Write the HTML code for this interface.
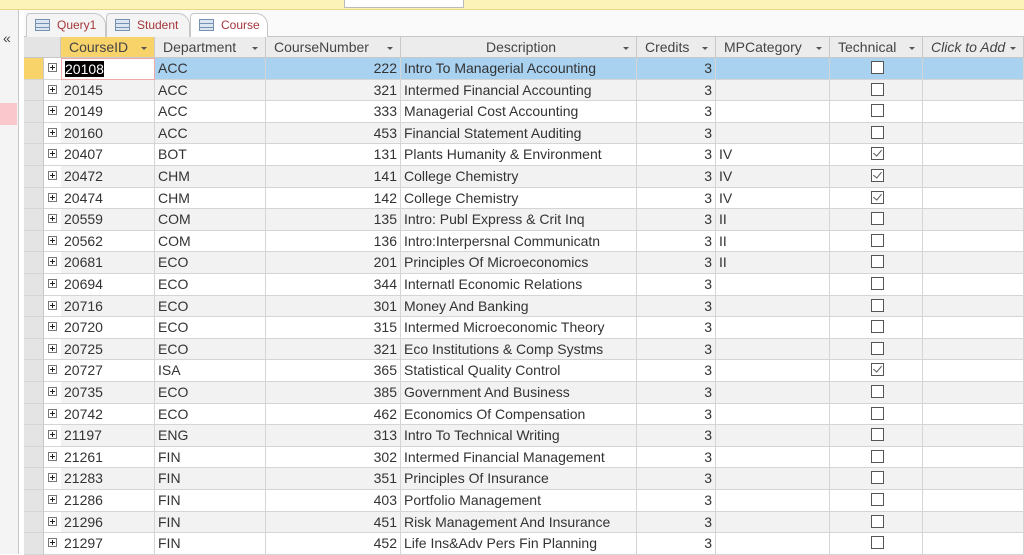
<!DOCTYPE html>
<html><head><meta charset="utf-8"><style>
*{margin:0;padding:0;box-sizing:border-box}
body{width:1024px;height:554px;overflow:hidden;background:#fff;font-family:"Liberation Sans",sans-serif;font-size:14px;color:#333;position:relative}
.top{position:absolute;left:0;top:0;width:1024px;height:10px;background:#fcf3b8;border-bottom:1px solid #e8d98a}
.topbtn{position:absolute;left:344px;top:-2px;width:120px;height:10px;background:#fff;border:1px solid #bbb}
.left{position:absolute;left:0;top:10px;width:19px;height:544px;background:#f4f4f4;border-right:1px solid #c8c8c8}
.pink{position:absolute;left:0;top:93px;width:17px;height:22px;background:#f9c7cc}
.chev{position:absolute;left:3px;top:20px;font-size:14px;color:#444}
.tabbar{position:absolute;left:24px;top:10px;width:1000px;height:27px;background:#fafafa;border-bottom:1px solid #c6c6c6}
.tab{position:absolute;top:3px;height:24px;background:#f4f4f4;border:1px solid #c6c6c6;border-bottom:none;border-radius:4px 12px 0 0;color:#a4373a;font-size:12px;padding:4px 0 0 30px}
.tab.act{background:#fff;height:25px}
.ti{position:absolute;left:8px;top:5px;width:15px;height:12px;border:1px solid #7891b0;background:repeating-linear-gradient(#dbe6f3 0 3px,#7891b0 3px 4px)}
.grid{position:absolute;left:24px;top:37px}
.row{position:absolute;left:0;height:21.6px;width:1000px;display:flex}
.c{height:100%;border-right:1px solid #d5d5d5;border-bottom:1px solid #d5d5d5;padding:0 3px;line-height:21px;white-space:nowrap;overflow:hidden;flex:none}
.hd .c{background:#ececec;border-color:#c8c8c8;color:#444;position:relative;padding-left:8px}
.hd .c.dd::after{content:"";position:absolute;right:7px;top:10px;border:3px solid transparent;border-top:3px solid #555}
.r{text-align:right}
.sel{background:#e4e4e4;border-right:1px solid #c8c8c8}
.ex{background:#fff;position:relative}
.ex i{position:absolute;left:4px;top:5px;width:9px;height:9px;border:1px solid #777;background:#fff}
.ex i::before{content:"";position:absolute;left:1px;top:3px;width:5px;height:1px;background:#222}
.ex i::after{content:"";position:absolute;left:3px;top:1px;width:1px;height:5px;background:#222}
.cb{position:relative}
.cb b{position:absolute;left:41px;top:3px;width:13px;height:13px;border:1px solid #555;background:#fff}
.cb b.k::after{content:"";position:absolute;left:3px;top:0px;width:4px;height:7px;border:solid #555;border-width:0 1.5px 1.5px 0;transform:rotate(40deg)}
.g{background:#f2f2f2}
.w{background:#fff}
.s{background:#a9d1f0}
</style></head><body>
<div class="top"><div class="topbtn"></div></div>
<div class="left"><div class="chev">«</div><div class="pink"></div></div>
<div class="tabbar">
<div class="tab" style="left:2px;width:80px"><span class="ti"></span>Query1</div>
<div class="tab" style="left:82px;width:84px"><span class="ti"></span>Student</div>
<div class="tab act" style="left:166px;width:78px"><span class="ti"></span>Course</div>
</div>
<div class="grid" id="g">
<div class="row hd" style="top:0;height:21px">
<div class="c" style="width:37px;background:#e4e4e4"></div>
<div class="c dd" style="width:94px;background:#f7d36a">CourseID</div>
<div class="c dd" style="width:111px">Department</div>
<div class="c dd" style="width:135px">CourseNumber</div>
<div class="c dd" style="width:236px;text-align:center">Description</div>
<div class="c dd" style="width:79px">Credits</div>
<div class="c dd" style="width:114px">MPCategory</div>
<div class="c dd" style="width:93px">Technical</div>
<div class="c dd" style="width:101px;font-style:italic">Click to Add</div>
</div>
</div>
<script>
var d=[["20108","ACC",222,"Intro To Managerial Accounting","",0],["20145","ACC",321,"Intermed Financial Accounting","",0],["20149","ACC",333,"Managerial Cost Accounting","",0],["20160","ACC",453,"Financial Statement Auditing","",0],["20407","BOT",131,"Plants Humanity &amp; Environment","IV",1],["20472","CHM",141,"College Chemistry","IV",1],["20474","CHM",142,"College Chemistry","IV",1],["20559","COM",135,"Intro: Publ Express &amp; Crit Inq","II",0],["20562","COM",136,"Intro:Interpersnal Communicatn","II",0],["20681","ECO",201,"Principles Of Microeconomics","II",0],["20694","ECO",344,"Internatl Economic Relations","",0],["20716","ECO",301,"Money And Banking","",0],["20720","ECO",315,"Intermed Microeconomic Theory","",0],["20725","ECO",321,"Eco Institutions &amp; Comp Systms","",0],["20727","ISA",365,"Statistical Quality Control","",1],["20735","ECO",385,"Government And Business","",0],["20742","ECO",462,"Economics Of Compensation","",0],["21197","ENG",313,"Intro To Technical Writing","",0],["21261","FIN",302,"Intermed Financial Management","",0],["21283","FIN",351,"Principles Of Insurance","",0],["21286","FIN",403,"Portfolio Management","",0],["21296","FIN",451,"Risk Management And Insurance","",0],["21297","FIN",452,"Life Ins&amp;Adv Pers Fin Planning","",0]];
var h="";
d.forEach(function(r,i){var top=21+i*21.6;var bg=i==0?"s":(i%2?"g":"w");
h+='<div class="row '+bg+'" style="top:'+top+'px">'+
'<div class="c sel" style="width:20px;'+(i==0?'background:#f7d36a':'')+'"></div>'+
'<div class="c ex" style="width:17px;border-right:none"><i></i></div>'+
'<div class="c" style="width:94px;'+(i==0?'background:#fff;border:1px solid #f0a8a8;':'')+'">'+(i==0?'<span style="background:#000;color:#fff">'+r[0]+'</span>':r[0])+'</div>'+
'<div class="c" style="width:111px">'+r[1]+'</div>'+
'<div class="c r" style="width:135px">'+r[2]+'</div>'+
'<div class="c" style="width:236px">'+r[3]+'</div>'+
'<div class="c r" style="width:79px">3</div>'+
'<div class="c" style="width:114px">'+r[4]+'</div>'+
'<div class="c cb" style="width:93px"><b class="'+(r[5]?'k':'')+'"></b></div>'+
'<div class="c" style="width:101px"></div></div>';});
document.getElementById("g").insertAdjacentHTML("beforeend",h);
</script>
</body></html>
